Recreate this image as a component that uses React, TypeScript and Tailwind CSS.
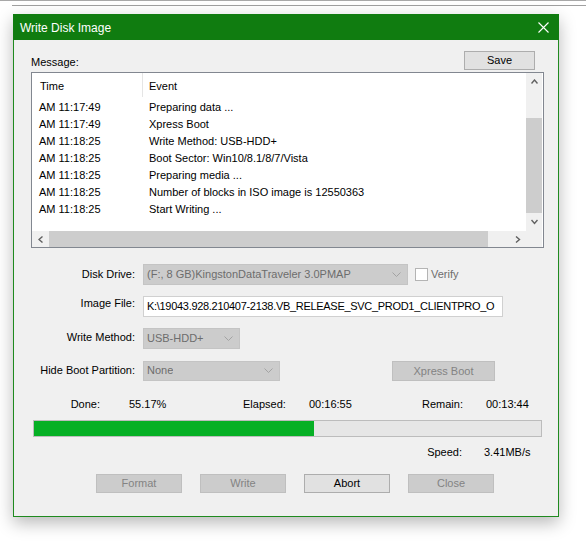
import React from 'react';

const LOG = [
  ['AM 11:17:49', 'Preparing data ...'],
  ['AM 11:17:49', 'Xpress Boot'],
  ['AM 11:18:25', 'Write Method: USB-HDD+'],
  ['AM 11:18:25', 'Boot Sector: Win10/8.1/8/7/Vista'],
  ['AM 11:18:25', 'Preparing media ...'],
  ['AM 11:18:25', 'Number of blocks in ISO image is 12550363'],
  ['AM 11:18:25', 'Start Writing ...'],
];

const DONE = 55.17;

function Chevron({ dir, color = '#606060' }: { dir: 'up' | 'down' | 'left' | 'right'; color?: string }) {
  const d = {
    up: 'M0.5 4.5 L3.5 1 L6.5 4.5',
    down: 'M0.5 1 L3.5 4.5 L6.5 1',
    left: 'M4.5 0.5 L1 3.5 L4.5 6.5',
    right: 'M1 0.5 L4.5 3.5 L1 6.5',
  }[dir];
  const vertical = dir === 'up' || dir === 'down';
  return (
    <svg width={vertical ? 7 : 6} height={vertical ? 6 : 7} viewBox={vertical ? '0 0 7 6' : '0 0 6 7'} fill="none">
      <path d={d} stroke={color} strokeWidth={1.4} />
    </svg>
  );
}

function Dropdown({ value, className }: { value: string; className: string }) {
  return (
    <div className={`flex items-center justify-between bg-[#cccccc] border border-[#c4c4c4] pl-[3px] pr-[6px] text-[#6d6d6d] ${className}`}>
      <span className="whitespace-nowrap overflow-hidden">{value}</span>
      <svg width="9" height="5" viewBox="0 0 9 5" fill="none" className="shrink-0">
        <path d="M0.5 0.5 L4.5 4.5 L8.5 0.5" stroke="#a3a3a3" strokeWidth={1} />
      </svg>
    </div>
  );
}

function Btn({ label, disabled, className = '' }: { label: string; disabled?: boolean; className?: string }) {
  return (
    <div
      className={`flex items-center justify-center border ${
        disabled ? 'bg-[#cccccc] border-[#bfbfbf] text-[#838383]' : 'bg-[#e1e1e1] border-[#adadad] text-black'
      } ${className}`}
    >
      {label}
    </div>
  );
}

export default function App() {
  return (
    <div className="w-[586px] h-[543px] bg-white overflow-hidden font-['Liberation_Sans',Arial,sans-serif] text-[11px] leading-[13px] text-black">
      {/* fenster dahinter */}
      <div className="h-px bg-[#a8a8a8]" />
      <div className="ml-[12px] mt-[4px] h-px bg-[#a0a0a0]" />

      {/* dialog */}
      <div className="ml-[13px] mt-[8px] w-[546px] h-[503px] flex flex-col border border-[#1f8a1f] bg-[#f0f0f0] shadow-[0_6px_16px_rgba(0,0,0,0.28)]">
        {/* titelleiste */}
        <div className="h-[26px] -mt-px -mx-px bg-[#107c10] flex items-center justify-between pl-[7px] pr-[10px] shrink-0">
          <span className="text-white text-[12px] leading-[14px] mt-[1px]">Write Disk Image</span>
          <svg width="11" height="11" viewBox="0 0 11 11" fill="none" className="mt-[1px]">
            <path d="M0.5 0.5 L10.5 10.5 M10.5 0.5 L0.5 10.5" stroke="#ffffff" strokeWidth={1.1} />
          </svg>
        </div>

        <div className="pl-[17px] pt-[11px] flex flex-col">
          {/* message kopf */}
          <div className="w-[504px] h-[19px] flex justify-between items-end">
            <span className="mb-[1px]">Message:</span>
            <Btn label="Save" className="w-[71px] h-[19px]" />
          </div>

          {/* listview */}
          <div className="mt-[2px] w-[513px] h-[176px] border border-[#828790] bg-white flex flex-col">
            <div className="flex h-[158px]">
              <div className="w-[494px] overflow-hidden">
                <div className="flex h-[26px] items-center">
                  <div className="w-[110px] pl-[8px]">Time</div>
                  <div className="w-px h-[24px] self-start bg-[#e5e5e5]" />
                  <div className="pl-[6px]">Event</div>
                </div>
                {LOG.map(([t, e], i) => (
                  <div key={i} className="flex h-[17px] items-center whitespace-nowrap">
                    <div className="w-[111px] pl-[7px]">{t}</div>
                    <div className="pl-[6px]">{e}</div>
                  </div>
                ))}
              </div>
              {/* vertikale leiste */}
              <div className="w-[16px] flex flex-col bg-[#f0f0f0]">
                <div className="h-[17px] flex items-center justify-center">
                  <Chevron dir="up" />
                </div>
                <div className="h-[28px]" />
                <div className="h-[95px] bg-[#cdcdcd]" />
                <div className="h-[18px] flex items-center justify-center">
                  <Chevron dir="down" />
                </div>
              </div>
            </div>
            {/* horizontale leiste */}
            <div className="flex h-[16px]">
              <div className="w-[494px] flex bg-[#f0f0f0]">
                <div className="w-[17px] flex items-center justify-center">
                  <Chevron dir="left" />
                </div>
                <div className="w-[439px] bg-[#cdcdcd]" />
                <div className="w-[21px]" />
                <div className="w-[17px] flex items-center justify-center">
                  <Chevron dir="right" />
                </div>
              </div>
              <div className="w-[16px] bg-[#f0f0f0]" />
            </div>
          </div>

          {/* formular */}
          <div className="mt-[16px] flex items-center h-[21px]">
            <div className="w-[104px] text-right">Disk Drive:</div>
            <Dropdown value="(F:, 8 GB)KingstonDataTraveler 3.0PMAP" className="ml-[8px] w-[265px] h-[21px]" />
            <div className="ml-[7px] w-[13px] h-[13px] border border-[#b4b4b4] bg-white" />
            <span className="ml-[3px] text-[#6d6d6d]">Verify</span>
          </div>

          <div className="mt-[11px] flex items-center h-[21px]">
            <div className="w-[104px] text-right -mt-[7px]">Image File:</div>
            <div className="ml-[8px] w-[360px] h-[21px] border border-[#d0d0d0] bg-white flex items-center pl-[3px] overflow-hidden">
              <span className="whitespace-nowrap tracking-[-0.3px]">
                K:\19043.928.210407-2138.VB_RELEASE_SVC_PROD1_CLIENTPRO_O
              </span>
            </div>
          </div>

          <div className="mt-[11px] flex items-center h-[21px]">
            <div className="w-[104px] text-right -mt-[2px]">Write Method:</div>
            <Dropdown value="USB-HDD+" className="ml-[8px] w-[97px] h-[21px]" />
          </div>

          <div className="mt-[11px] flex items-center h-[21px]">
            <div className="w-[104px] text-right -mt-[1px]">Hide Boot Partition:</div>
            <Dropdown value="None" className="ml-[8px] w-[137px] h-[20px]" />
            <Btn label="Xpress Boot" disabled className="ml-[112px] w-[103px] h-[20px] mt-[1px]" />
          </div>

          {/* fortschritt */}
          <div className="mt-[17px] flex h-[13px] whitespace-nowrap">
            <div className="w-[69px] text-right">Done:</div>
            <div className="ml-[29px] w-[114px]">{DONE.toFixed(2)}%</div>
            <div className="w-[40px] text-right">Elapsed:</div>
            <div className="ml-[26px] w-[113px]">00:16:55</div>
            <div className="w-[40px] text-right">Remain:</div>
            <div className="ml-[24px]">00:13:44</div>
          </div>

          <div className="mt-[9px] ml-[2px] w-[509px] h-[17px] border border-[#bcbcbc] bg-[#e6e6e6]">
            <div className="h-full bg-[#06b025]" style={{ width: `${DONE}%` }} />
          </div>

          <div className="mt-[9px] flex h-[13px] whitespace-nowrap">
            <div className="w-[431px] text-right">Speed:</div>
            <div className="ml-[22px]">3.41MB/s</div>
          </div>

          <div className="mt-[15px] ml-[65px] flex gap-[18px]">
            <Btn label="Format" disabled className="w-[86px] h-[19px]" />
            <Btn label="Write" disabled className="w-[86px] h-[19px]" />
            <Btn label="Abort" className="w-[86px] h-[19px]" />
            <Btn label="Close" disabled className="w-[86px] h-[19px]" />
          </div>
        </div>
      </div>
    </div>
  );
}
